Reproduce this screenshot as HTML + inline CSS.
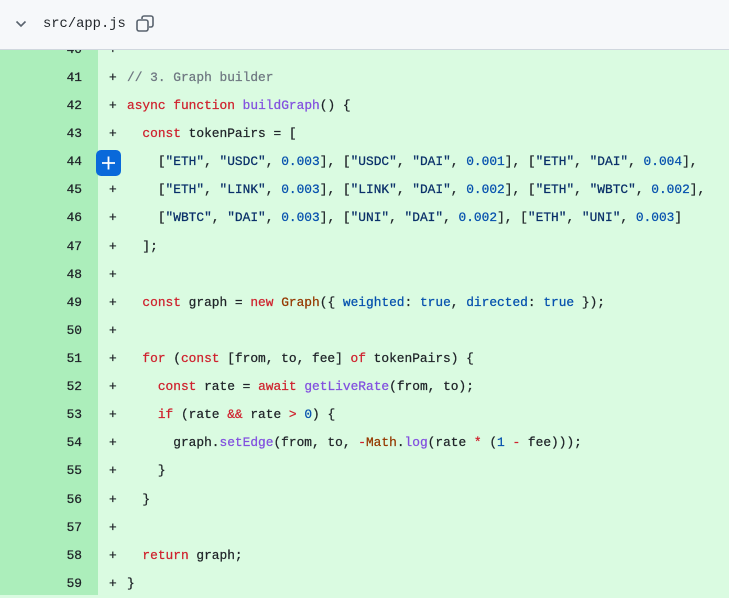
<!DOCTYPE html>
<html><head><meta charset="utf-8"><style>
body{margin:0;width:729px;height:595px;overflow:hidden;background:#dafbe1;font-family:"Liberation Mono",monospace;position:relative}
.hdr{position:absolute;left:0;top:0;width:729px;height:50px;background:#f6f8fa;border-bottom:1px solid #d0d7de;box-sizing:border-box;z-index:2}
.hdr .name{position:absolute;left:43px;top:17px;font-size:13.8px;color:#1f2328}
.gut{position:absolute;left:0;top:0;width:98px;height:595px;background:#aceebb}
.ln{position:absolute;left:0;width:729px;height:28px;line-height:28px;font-size:12.85px;color:#1f2328;white-space:pre;-webkit-text-stroke:0.25px currentColor}
.ln .n{position:absolute;right:647px;width:60px;text-align:right;color:#1f2328}
.ln .p{position:absolute;left:109px}
.ln .c{position:absolute;left:127px}
.k{color:#cf222e}.f{color:#8250df}.s{color:#0a3069}.b{color:#0550ae}.cm{color:#6e7781}.o{color:#953800}
.btn{position:absolute;left:96px;top:150px;width:25px;height:26px;background:#0969da;border-radius:5px;z-index:3}
</style></head><body>
<div class="gut"></div>
<div class="hdr">
<svg style="position:absolute;left:15px;top:19px" width="12" height="10" viewBox="0 0 12 10"><path d="M1.5 2.5 L6 7 L10.5 2.5" fill="none" stroke="#59636e" stroke-width="1.6"/></svg>
<span class="name">src/app.js</span>
<svg style="position:absolute;left:136px;top:15px" width="18" height="18" viewBox="0 0 18 18"><rect x="1" y="5" width="11" height="11" rx="2" fill="none" stroke="#59636e" stroke-width="1.6"/><path d="M6 4 V3 a2 2 0 0 1 2-2 h7 a2 2 0 0 1 2 2 v7 a2 2 0 0 1-2 2 h-2" fill="none" stroke="#59636e" stroke-width="1.6"/></svg>
</div>
<div class="btn"><svg width="25" height="26" viewBox="0 0 25 26"><path d="M12.5 6.5 V19.5 M6 13 H19" stroke="#fff" stroke-width="1.8"/></svg></div>

<div class="ln" style="top:36px"><span class="n">40</span><span class="p">+</span></div>
<div class="ln" style="top:64px"><span class="n">41</span><span class="p">+</span><span class="c"><span class="cm">// 3. Graph builder</span></span></div>
<div class="ln" style="top:92px"><span class="n">42</span><span class="p">+</span><span class="c"><span class="k">async</span> <span class="k">function</span> <span class="f">buildGraph</span>() {</span></div>
<div class="ln" style="top:120px"><span class="n">43</span><span class="p">+</span><span class="c">  <span class="k">const</span> tokenPairs = [</span></div>
<div class="ln" style="top:148px"><span class="n">44</span><span class="c">    [<span class="s">"ETH"</span>, <span class="s">"USDC"</span>, <span class="b">0.003</span>], [<span class="s">"USDC"</span>, <span class="s">"DAI"</span>, <span class="b">0.001</span>], [<span class="s">"ETH"</span>, <span class="s">"DAI"</span>, <span class="b">0.004</span>],</span></div>
<div class="ln" style="top:176px"><span class="n">45</span><span class="p">+</span><span class="c">    [<span class="s">"ETH"</span>, <span class="s">"LINK"</span>, <span class="b">0.003</span>], [<span class="s">"LINK"</span>, <span class="s">"DAI"</span>, <span class="b">0.002</span>], [<span class="s">"ETH"</span>, <span class="s">"WBTC"</span>, <span class="b">0.002</span>],</span></div>
<div class="ln" style="top:204px"><span class="n">46</span><span class="p">+</span><span class="c">    [<span class="s">"WBTC"</span>, <span class="s">"DAI"</span>, <span class="b">0.003</span>], [<span class="s">"UNI"</span>, <span class="s">"DAI"</span>, <span class="b">0.002</span>], [<span class="s">"ETH"</span>, <span class="s">"UNI"</span>, <span class="b">0.003</span>]</span></div>
<div class="ln" style="top:233px"><span class="n">47</span><span class="p">+</span><span class="c">  ];</span></div>
<div class="ln" style="top:261px"><span class="n">48</span><span class="p">+</span></div>
<div class="ln" style="top:289px"><span class="n">49</span><span class="p">+</span><span class="c">  <span class="k">const</span> graph = <span class="k">new</span> <span class="o">Graph</span>({ <span class="b">weighted</span>: <span class="b">true</span>, <span class="b">directed</span>: <span class="b">true</span> });</span></div>
<div class="ln" style="top:317px"><span class="n">50</span><span class="p">+</span></div>
<div class="ln" style="top:345px"><span class="n">51</span><span class="p">+</span><span class="c">  <span class="k">for</span> (<span class="k">const</span> [from, to, fee] <span class="k">of</span> tokenPairs) {</span></div>
<div class="ln" style="top:373px"><span class="n">52</span><span class="p">+</span><span class="c">    <span class="k">const</span> rate = <span class="k">await</span> <span class="f">getLiveRate</span>(from, to);</span></div>
<div class="ln" style="top:401px"><span class="n">53</span><span class="p">+</span><span class="c">    <span class="k">if</span> (rate <span class="k">&amp;&amp;</span> rate <span class="k">&gt;</span> <span class="b">0</span>) {</span></div>
<div class="ln" style="top:429px"><span class="n">54</span><span class="p">+</span><span class="c">      graph.<span class="f">setEdge</span>(from, to, <span class="k">-</span><span class="o">Math</span>.<span class="f">log</span>(rate <span class="k">*</span> (<span class="b">1</span> <span class="k">-</span> fee)));</span></div>
<div class="ln" style="top:457px"><span class="n">55</span><span class="p">+</span><span class="c">    }</span></div>
<div class="ln" style="top:486px"><span class="n">56</span><span class="p">+</span><span class="c">  }</span></div>
<div class="ln" style="top:514px"><span class="n">57</span><span class="p">+</span></div>
<div class="ln" style="top:542px"><span class="n">58</span><span class="p">+</span><span class="c">  <span class="k">return</span> graph;</span></div>
<div class="ln" style="top:570px"><span class="n">59</span><span class="p">+</span><span class="c">}</span></div>
</body></html>
